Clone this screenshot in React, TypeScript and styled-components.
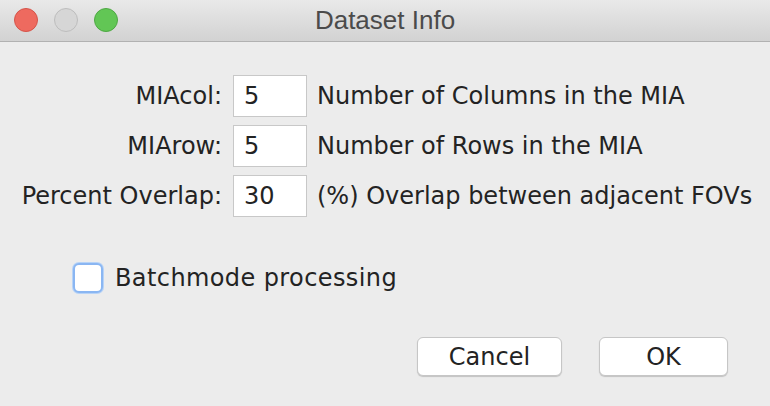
import React from 'react'
import styled, { createGlobalStyle } from 'styled-components'

const GlobalStyle = createGlobalStyle`
  html, body {
    margin: 0;
    padding: 0;
    background: #ececec;
  }
  #root {
    width: 770px;
    height: 406px;
  }
`

const Window = styled.div`
  width: 770px;
  height: 406px;
  background: #ececec;
  display: flex;
  flex-direction: column;
  font-family: 'DejaVu Sans', 'Liberation Sans', sans-serif;
  color: #232323;
  overflow: hidden;
`

const TitleBar = styled.div`
  height: 41px;
  flex-shrink: 0;
  background: linear-gradient(#e9e9e9, #d2d2d2);
  border-bottom: 1px solid #b1b1b1;
  display: flex;
  align-items: center;
  position: relative;
  padding-left: 14px;
  gap: 16px;
`

const Light = styled.span<{ fill: string; edge: string }>`
  width: 24px;
  height: 24px;
  border-radius: 50%;
  background: ${(p) => p.fill};
  border: 1px solid ${(p) => p.edge};
  box-sizing: border-box;
  margin-top: -1px;
`

const Title = styled.div`
  position: absolute;
  left: 0;
  right: 0;
  text-align: center;
  font-family: 'Liberation Sans', Arial, sans-serif;
  font-size: 26px;
  color: #4b4b4b;
  pointer-events: none;
`

const Body = styled.div`
  flex: 1;
  display: flex;
  flex-direction: column;
  padding: 33px 20px 0 20px;
`

const Form = styled.div`
  display: grid;
  grid-template-columns: 202px 74px auto;
  column-gap: 11px;
  row-gap: 8px;
  align-items: center;
`

const Label = styled.span`
  font-size: 24px;
  text-align: right;
  white-space: nowrap;
`

const Field = styled.div`
  width: 74px;
  height: 42px;
  box-sizing: border-box;
  background: #fff;
  border: 1px solid #c8c8c8;
  display: flex;
  align-items: center;
  padding-left: 10px;
  font-size: 24px;
`

const Hint = styled.span`
  font-size: 24px;
  white-space: nowrap;
  margin-left: -1px;
`

const CheckRow = styled.label`
  display: flex;
  align-items: center;
  gap: 12px;
  margin: 46px 0 0 53px;
  font-size: 24px;
  letter-spacing: 0.4px;
`

const Box = styled.span`
  width: 30px;
  height: 30px;
  box-sizing: border-box;
  border-radius: 6px;
  background: #fff;
  border: 2px solid #8ab6f2;
  box-shadow: 0 0 0 1px #b7d3f7;
`

const Buttons = styled.div`
  display: flex;
  justify-content: flex-end;
  gap: 37px;
  margin-top: 44px;
  padding-right: 22px;
`

const Button = styled.button<{ w: number }>`
  width: ${(p) => p.w}px;
  height: 39px;
  background: #fff;
  border: 1px solid #c6c6c6;
  border-radius: 6px;
  box-shadow: 0 1px 1px rgba(0, 0, 0, 0.18);
  font-family: 'DejaVu Sans', 'Liberation Sans', sans-serif;
  font-size: 24px;
  color: #232323;
  padding: 0;
`

const rows = [
  { label: 'MIAcol:', value: '5', hint: 'Number of Columns in the MIA' },
  { label: 'MIArow:', value: '5', hint: 'Number of Rows in the MIA' },
  { label: 'Percent Overlap:', value: '30', hint: '(%) Overlap between adjacent FOVs' },
]

export default function App() {
  return (
    <>
      <GlobalStyle />
      <Window>
        <TitleBar>
          <Light fill="#ee6a5f" edge="#d5544a" />
          <Light fill="#d6d6d6" edge="#bdbdbd" />
          <Light fill="#62c655" edge="#4ea844" />
          <Title>Dataset Info</Title>
        </TitleBar>
        <Body>
          <Form>
            {rows.map((r) => (
              <React.Fragment key={r.label}>
                <Label>{r.label}</Label>
                <Field>{r.value}</Field>
                <Hint>{r.hint}</Hint>
              </React.Fragment>
            ))}
          </Form>
          <CheckRow>
            <Box />
            Batchmode processing
          </CheckRow>
          <Buttons>
            <Button w={145}>Cancel</Button>
            <Button w={129}>OK</Button>
          </Buttons>
        </Body>
      </Window>
    </>
  )
}
